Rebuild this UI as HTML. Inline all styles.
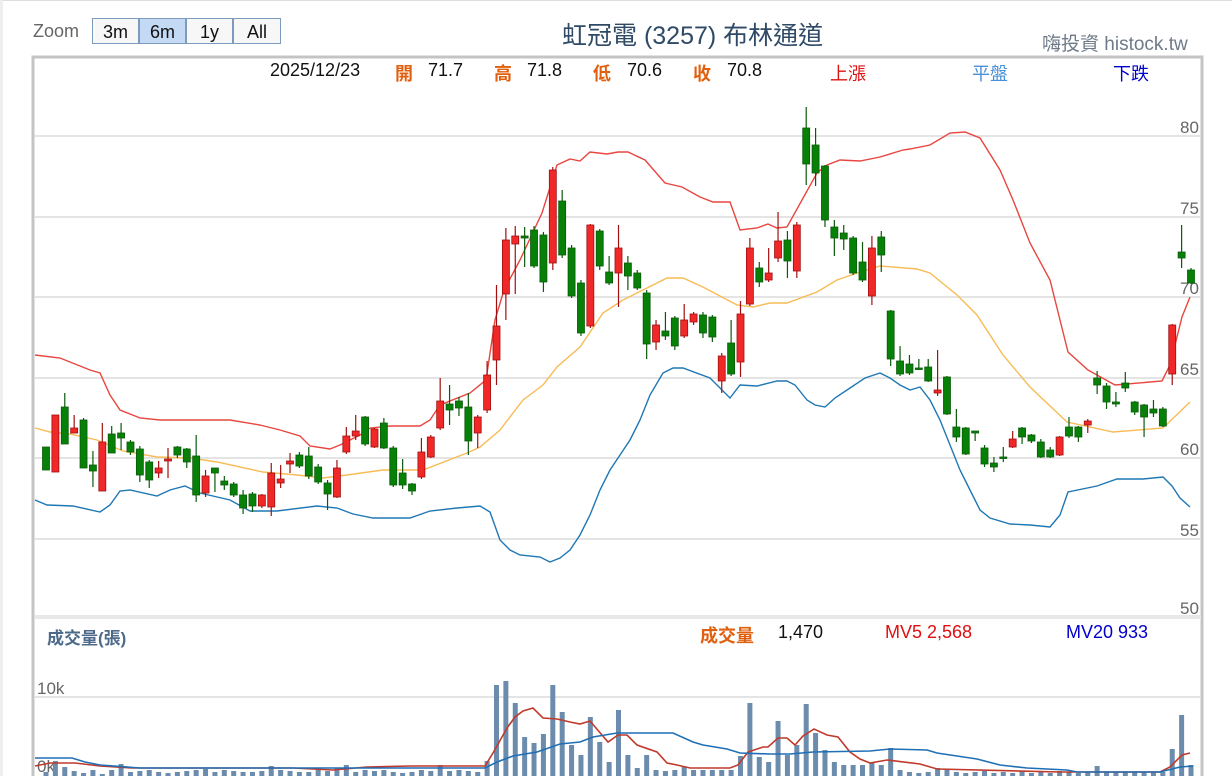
<!DOCTYPE html>
<html><head><meta charset="utf-8">
<style>
html,body{margin:0;padding:0;background:#fff;}
body{width:1232px;height:776px;overflow:hidden;position:relative;font-family:"Liberation Sans","Noto Sans CJK TC",sans-serif;}
.t{position:absolute;white-space:nowrap;}
.btn{position:absolute;top:18px;height:26px;border:1px solid #7d9bbd;background:#f7f7f7;font-size:18px;line-height:26px;text-align:center;color:#111;box-sizing:border-box;}
</style></head><body>
<div style="position:absolute;left:0;top:0;width:1232px;height:1px;background:#ddd"></div>
<div style="position:absolute;left:0;top:0;width:3px;height:776px;background:#eee"></div>
<div class="t" style="left:33px;top:21px;font-size:18px;color:#666">Zoom</div>
<div class="btn" style="left:92px;width:47px">3m</div>
<div class="btn" style="left:139px;width:47px;background:#c4d9f3">6m</div>
<div class="btn" style="left:186px;width:47px">1y</div>
<div class="btn" style="left:233px;width:48px">All</div>
<div class="t" style="left:562px;top:16px;font-size:25px;color:#2e4a66">虹冠電 (3257) 布林通道</div>
<div class="t" style="left:1042px;top:29px;font-size:19px;color:#6f7b88">嗨投資 histock.tw</div>

<svg id="c" width="1232" height="776" style="position:absolute;left:0;top:0" xmlns="http://www.w3.org/2000/svg">
<rect x="33" y="57" width="1169" height="730" fill="#fff" stroke="#c4c4c4" stroke-width="3"/>
<g stroke="#e4e4e4" stroke-width="2">
<line x1="35" x2="1200" y1="136" y2="136"/><line x1="35" x2="1200" y1="217" y2="217"/>
<line x1="35" x2="1200" y1="297" y2="297"/><line x1="35" x2="1200" y1="378" y2="378"/>
<line x1="35" x2="1200" y1="458" y2="458"/><line x1="35" x2="1200" y1="539" y2="539"/>
<line x1="35" x2="1200" y1="697" y2="697"/>
</g>
<rect x="35" y="615" width="1166" height="4" fill="#e8e8e8"/>
<g font-size="17" fill="#666" font-family="Liberation Sans, sans-serif">
<text x="1180" y="133">80</text><text x="1180" y="214">75</text><text x="1180" y="294">70</text>
<text x="1180" y="375">65</text><text x="1180" y="455">60</text><text x="1180" y="536">55</text><text x="1180" y="614">50</text>
<text x="37" y="694">10k</text><text x="37" y="772">0k</text>
</g>
<g id="vol"></g>
<polyline fill="none" stroke="#c0392b" stroke-width="1.6" points="35,766 50,763 75,763 100,766 133,768 293,768 333,770 367,767 410,766 470,766 485,766 493,753 507,728 515,717 523,711 533,708 543,718 557,719 570,722 580,724 590,721 608,742 618,735 627,735 637,745 657,752 667,763 677,765 690,768 730,768 738,765 748,752 763,747 768,747 778,738 787,738 795,745 803,736 814,729 827,735 838,737 850,752 860,759 870,763 887,760 920,764 937,769 1060,772 1160,772 1170,767 1182,755 1190,753"/>
<polyline fill="none" stroke="#1f6fb5" stroke-width="1.6" points="35,758 72,758 85,762 100,765 140,768 300,768 485,768 497,762 513,756 537,752 560,744 580,742 593,737 617,733 643,733 673,733 693,742 703,745 727,749 740,753 770,754 790,754 813,752 870,751 890,749 927,750 937,753 957,756 977,759 1000,765 1027,768 1067,770 1077,772 1160,772 1180,767 1193,766"/>
<polyline fill="none" stroke="#e8463f" stroke-width="1.4" points="35,355 60,358 90,370 100,373 110,395 120,410 140,418 160,420 200,420 230,420 260,425 280,430 300,436 310,446 330,449 340,445 360,435 370,428 390,426 420,426 430,420 440,405 470,393 486,380 495,320 504,290 520,260 542,213 557,165 570,159 580,161 590,152 607,154 618,152 628,152 645,160 665,183 682,187 700,197 713,202 730,202 740,230 757,228 768,224 777,228 787,227 817,173 827,165 840,160 860,161 880,157 903,150 910,149 930,145 950,133 965,132 980,138 1000,170 1013,200 1030,243 1050,280 1068,352 1088,370 1115,385 1162,381 1170,365 1182,317 1190,297"/>
<polyline fill="none" stroke="#f8bb55" stroke-width="1.4" points="35,428 50,432 70,434 97,440 123,451 157,457 190,458 217,462 263,472 297,475 323,478 347,475 383,470 423,470 467,453 480,447 500,430 523,400 543,385 557,367 580,347 603,313 623,300 643,290 667,278 683,278 703,287 737,305 753,307 770,303 787,303 817,292 837,280 857,273 880,266 917,269 930,273 957,295 977,315 1003,355 1030,387 1067,422 1113,432 1163,428 1190,402"/>
<polyline fill="none" stroke="#1f77b4" stroke-width="1.4" points="35,500 47,505 73,506 100,512 110,505 120,491 130,490 157,496 170,490 185,486 200,493 230,500 250,511 277,511 317,506 337,508 353,514 373,518 410,518 430,511 457,508 480,506 490,512 500,540 510,550 520,555 540,557 550,562 560,558 570,550 580,535 590,515 600,490 610,470 620,455 630,440 640,420 650,395 663,373 673,368 683,368 710,378 730,398 740,385 757,386 777,381 787,381 795,385 807,400 815,405 825,407 835,398 850,388 865,378 880,373 890,378 900,385 910,390 920,387 930,400 940,420 950,445 960,470 970,490 980,510 990,518 1010,524 1030,525 1050,527 1060,515 1068,492 1097,486 1117,479 1143,479 1163,477 1172,486 1180,498 1190,507"/>
<g id="cnd"></g>
</svg>

<div class="t" style="left:270px;top:60px;font-size:18px;color:#111">2025/12/23</div>
<div class="t" style="left:395px;top:60px;font-size:18px;color:#e0600f;font-weight:bold">開</div>
<div class="t" style="left:428px;top:60px;font-size:18px;color:#111">71.7</div>
<div class="t" style="left:494px;top:60px;font-size:18px;color:#e0600f;font-weight:bold">高</div>
<div class="t" style="left:527px;top:60px;font-size:18px;color:#111">71.8</div>
<div class="t" style="left:593px;top:60px;font-size:18px;color:#e0600f;font-weight:bold">低</div>
<div class="t" style="left:627px;top:60px;font-size:18px;color:#111">70.6</div>
<div class="t" style="left:693px;top:60px;font-size:18px;color:#e0600f;font-weight:bold">收</div>
<div class="t" style="left:727px;top:60px;font-size:18px;color:#111">70.8</div>
<div class="t" style="left:830px;top:60px;font-size:18px;color:#e01010">上漲</div>
<div class="t" style="left:972px;top:60px;font-size:18px;color:#4a90d9">平盤</div>
<div class="t" style="left:1113px;top:60px;font-size:18px;color:#0000cc">下跌</div>

<div class="t" style="left:47px;top:624px;font-size:17px;color:#4e6a8a;font-weight:bold">成交量(張)</div>
<div class="t" style="left:700px;top:622px;font-size:18px;color:#e0600f;font-weight:bold">成交量</div>
<div class="t" style="left:778px;top:622px;font-size:18px;color:#111">1,470</div>
<div class="t" style="left:885px;top:622px;font-size:18px;color:#e01010">MV5 2,568</div>
<div class="t" style="left:1066px;top:622px;font-size:18px;color:#0000cc">MV20 933</div>

<script>
var C=[[447,470,447,470,0],[415,472,415,472,1],[407,444,393,444,0],[428,433,415,433,1],[420,468,418,468,0],[465,471,451,487,0],[442,491,423,491,1],[434,453,426,453,0],[433,438,423,450,0],[442,452,440,455,0],[449,475,446,482,0],[462,480,460,488,0],[468,473,461,478,1],[459,461,448,478,1],[447,455,446,458,0],[449,462,448,468,0],[456,495,435,502,0],[476,493,470,497,1],[468,473,468,492,0],[481,485,476,490,0],[484,495,482,497,0],[495,508,490,514,0],[494,506,492,512,0],[495,506,494,508,1],[473,507,463,516,1],[479,483,465,488,1],[461,464,453,473,1],[455,466,452,468,0],[456,476,447,479,0],[467,482,464,484,0],[483,494,480,510,0],[468,497,460,498,1],[436,452,427,454,1],[431,436,415,440,1],[417,444,416,446,0],[429,447,428,448,1],[423,448,418,449,0],[448,485,446,487,0],[473,485,459,489,0],[484,491,483,495,0],[452,477,438,479,1],[437,457,435,458,1],[401,428,378,430,1],[404,410,385,425,0],[401,408,397,416,0],[407,441,393,455,0],[417,433,415,448,1],[375,410,361,413,1],[326,360,285,385,1],[240,294,228,320,1],[236,244,226,294,1],[236,238,227,267,0],[230,266,226,268,0],[235,282,232,292,0],[170,263,167,270,1],[201,255,190,258,0],[248,296,245,298,0],[283,333,280,336,0],[225,326,224,328,1],[231,266,229,270,0],[272,283,256,285,0],[248,273,225,307,1],[263,276,256,290,0],[273,288,270,290,0],[293,344,290,359,0],[325,342,320,350,1],[331,336,312,340,0],[318,346,316,350,0],[320,336,304,338,1],[314,322,312,325,1],[315,333,312,338,0],[317,337,315,342,0],[356,381,353,393,1],[343,374,320,376,0],[314,362,301,377,1],[248,304,238,306,1],[268,282,262,287,0],[273,280,248,282,1],[241,258,212,262,1],[240,261,231,278,0],[225,271,222,278,1],[128,164,107,185,0],[145,173,128,186,0],[166,220,165,227,0],[227,238,220,256,0],[233,239,225,250,0],[238,273,236,275,0],[262,280,242,282,0],[248,296,236,305,1],[237,255,231,272,0],[311,359,310,366,0],[361,374,346,376,0],[364,373,355,375,0],[368,369,359,370,0],[367,381,359,382,0],[390,393,350,396,1],[377,414,376,415,0],[427,437,409,442,0],[428,454,427,455,0],[431,433,431,441,0],[448,464,445,467,0],[463,467,457,472,0],[457,458,447,462,0],[439,447,431,448,1],[428,437,427,444,0],[435,441,434,443,0],[442,457,439,458,0],[450,457,447,458,0],[437,455,436,456,1],[427,436,417,438,0],[427,437,426,442,0],[421,425,419,433,1],[378,385,371,394,0],[386,402,383,409,0],[402,404,392,407,0],[383,388,372,392,0],[402,412,401,415,0],[405,417,404,437,0],[409,413,400,417,0],[409,426,407,427,0],[325,374,324,385,1],[252,258,225,268,0],[270,283,268,284,0]];
var V=[772,761,767,771,773,770,774,770,764,772,771,770,772,773,772,771,770,769,772,770,771,772,772,771,766,770,771,772,772,770,771,768,765,772,770,771,770,772,773,772,770,771,765,771,770,771,772,761,685,681,703,737,743,734,685,712,745,755,717,742,762,710,755,768,755,770,771,770,767,770,770,770,770,770,756,703,757,762,721,755,745,704,733,750,762,765,765,765,763,765,748,770,772,773,772,768,770,772,773,772,771,773,772,773,771,773,772,773,771,772,773,772,766,772,772,772,772,772,772,772,749,715,765];
var n=C.length,step=(1191-46)/(n-1),s='',v='';
for(var i=0;i<n;i++){var x=46+i*step,c=C[i],col=c[4]?'#f02828':'#068006',sc=c[4]?'#a01010':'#0a5a0a';
s+='<line x1="'+x+'" x2="'+x+'" y1="'+c[2]+'" y2="'+c[3]+'" stroke="'+sc+'" stroke-width="1.2"/>';
var h=Math.max(c[1]-c[0],1.5);
s+='<rect x="'+(x-3.5)+'" y="'+c[0]+'" width="7" height="'+h+'" fill="'+col+'" stroke="'+sc+'" stroke-width="0.8"/>';
var t=V[i]!==undefined?V[i]:772;
v+='<rect x="'+(x-2.5)+'" y="'+t+'" width="5" height="'+(780-t)+'" fill="#6c8cad"/>';}
document.getElementById('cnd').innerHTML=s;document.getElementById('vol').innerHTML=v;
</script>
</body></html>
